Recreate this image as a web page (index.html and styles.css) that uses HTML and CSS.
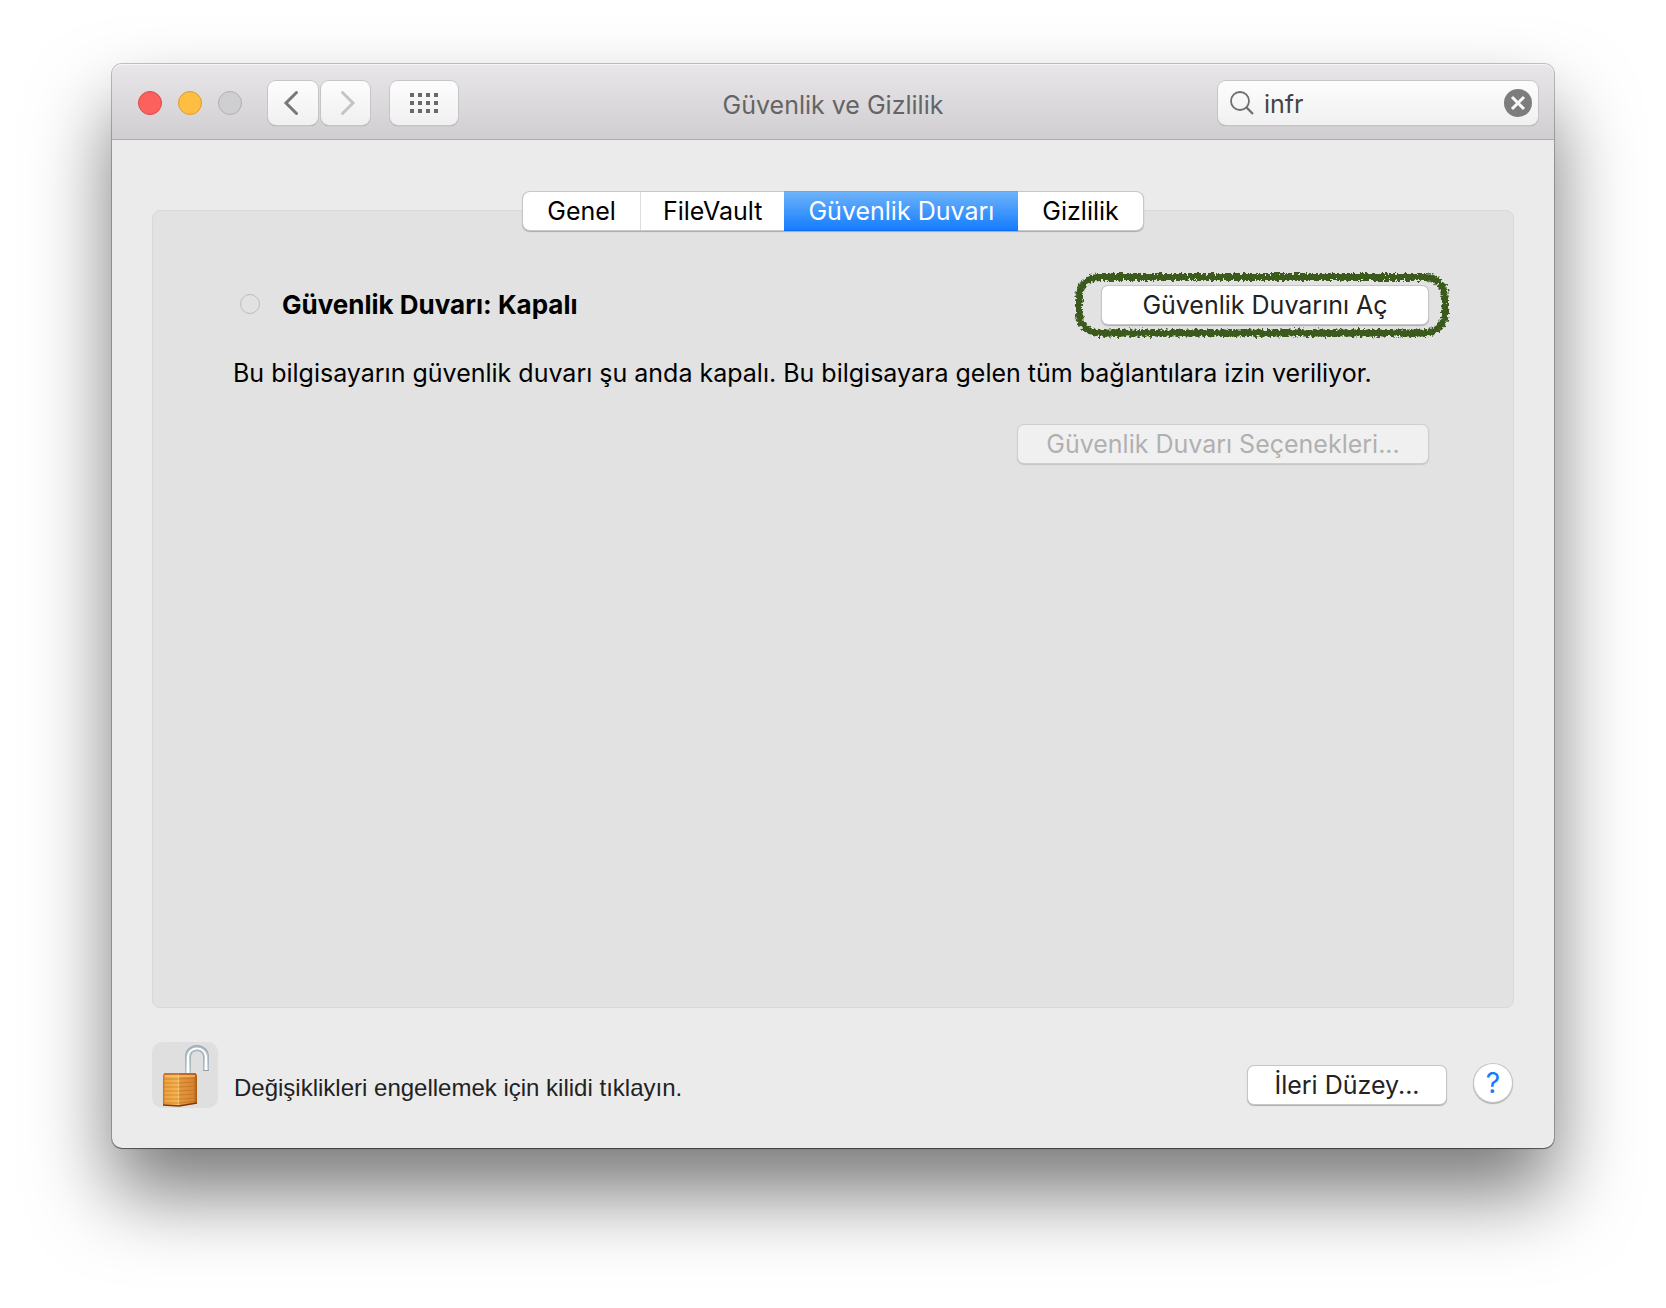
FILE: index.html
```html
<!DOCTYPE html>
<html lang="tr">
<head>
<meta charset="utf-8">
<meta name="viewport" content="width=device-width, initial-scale=1">
<title>Güvenlik ve Gizlilik</title>
<link rel="stylesheet" href="styles.css">
</head>
<body>
<main class="window">
  <header class="titlebar">
    <div class="titlebar-left">
      <div class="lights">
        <button class="light light-close" aria-label="Kapat"></button>
        <button class="light light-min" aria-label="Küçült"></button>
        <button class="light light-zoom" aria-label="Büyüt" disabled></button>
      </div>
      <div class="nav">
        <button class="tool tool-back" aria-label="Geri">
          <svg width="16" height="26" viewBox="0 0 16 26"><path d="M13.500 2.500 L3 13 L13.500 23.500" fill="none" stroke="#777" stroke-width="3" stroke-linecap="round"/></svg>
        </button>
        <button class="tool tool-forward" aria-label="İleri" disabled>
          <svg width="16" height="26" viewBox="0 0 16 26"><path d="M2.500 2.500 L13 13 L2.500 23.500" fill="none" stroke="#c4c4c4" stroke-width="3" stroke-linecap="round"/></svg>
        </button>
      </div>
      <button class="tool tool-all" aria-label="Tümünü Göster">
        <svg width="28" height="20" viewBox="0 0 28 20" fill="#6a6a6a"><path d="M0 0h4v4H0zM8 0h4v4H8zM16 0h4v4h-4zM24 0h4v4h-4zM0 8h4v4H0zM8 8h4v4H8zM16 8h4v4h-4zM24 8h4v4h-4zM0 16h4v4H0zM8 16h4v4H8zM16 16h4v4h-4zM24 16h4v4h-4z"/></svg>
      </button>
    </div>
    <h1 class="title">Güvenlik ve Gizlilik</h1>
    <div class="search">
      <svg width="24" height="24" viewBox="0 0 24 24" fill="none" stroke="#6e6e6e" stroke-width="1.800"><circle cx="10" cy="10" r="9"/><path d="M16.400 16.400 L23 23" stroke-width="2.200"/></svg>
      <input class="search-input" type="text" value="infr" aria-label="Ara">
      <button class="search-clear" aria-label="Temizle">
        <svg width="28" height="28" viewBox="0 0 28 28"><circle cx="14" cy="14" r="14" fill="#7d7d7d"/><path d="M8 8 L20 20 M20 8 L8 20" stroke="#fafafa" stroke-width="3"/></svg>
      </button>
    </div>
  </header>

  <div class="content">
    <nav class="tabs">
      <button class="tab">Genel</button>
      <button class="tab">FileVault</button>
      <button class="tab tab-active">Güvenlik Duvarı</button>
      <button class="tab">Gizlilik</button>
    </nav>
    <section class="panel">
      <div class="status">
        <span class="dot"></span>
        <h2 class="status-text">Güvenlik Duvarı: Kapalı</h2>
        <div class="marked">
          <button class="btn btn-turn-on">Güvenlik Duvarını Aç</button>
          <svg class="marker" width="380" height="72" viewBox="0 0 380 72" aria-hidden="true">
            <defs>
              <filter id="chalk" x="-5%" y="-10%" width="110%" height="120%">
                <feTurbulence type="fractalNoise" baseFrequency="0.350" numOctaves="2" seed="7" result="n"/>
                <feDisplacementMap in="SourceGraphic" in2="n" scale="6" xChannelSelector="R" yChannelSelector="G"/>
              </filter>
            </defs>
            <g fill="none" stroke="#3a5a1d" filter="url(#chalk)">
              <rect x="7" y="8" width="366" height="56" rx="20" stroke-width="6"/>
              <rect x="7" y="8" width="366" height="56" rx="20" stroke-width="8" stroke-dasharray="3 2 1 1 4 2"/>
            </g>
          </svg>
        </div>
      </div>
      <p class="description">Bu bilgisayarın güvenlik duvarı şu anda kapalı. Bu bilgisayara gelen tüm bağlantılara izin veriliyor.</p>
      <button class="btn btn-options" disabled>Güvenlik Duvarı Seçenekleri...</button>
    </section>
    <footer class="footer">
      <button class="lock" id="lock" aria-labelledby="lock-label">
        <svg width="66" height="66" viewBox="0 0 66 66">
          <defs>
            <linearGradient id="face" x1="0" x2="1"><stop offset="0" stop-color="#c06c18"/><stop offset=".12" stop-color="#eda340"/><stop offset=".9" stop-color="#f4b452"/><stop offset="1" stop-color="#ffd88a"/></linearGradient>
            <linearGradient id="side" x1="0" x2="1"><stop offset="0" stop-color="#e59a40"/><stop offset=".8" stop-color="#d78530"/><stop offset="1" stop-color="#a85512"/></linearGradient>
            <linearGradient id="steel" x1="0" y1="0" x2="0" y2="1"><stop offset="0" stop-color="#a9b6bc"/><stop offset="1" stop-color="#dce6ea"/></linearGradient>
          </defs>
          <path d="M36 33 V15 C36 3 54 3 54 15 V29" fill="none" stroke="#8fa0a8" stroke-width="6"/>
          <path d="M36 33 V15 C36 3 54 3 54 15 V28" fill="none" stroke="url(#steel)" stroke-width="5"/>
          <path d="M36 31 V15 C36 4.500 52 3 54 14 V28" fill="none" stroke="#fff" stroke-width="2"/>
          <path d="M11 33 L13 31 H27 V64 L11 63 Z" fill="url(#face)"/>
          <path d="M27 31 H43 L45 33 V61 L27 64 Z" fill="url(#side)"/>
          <path d="M11 37 H27 L45 36 M11 41 H27 L45 40 M11 45 H27 L45 44 M11 49 H27 L45 48 M11 53 H27 L45 52 M11 57 H27 L45 56 M11 61 H27 L45 59" fill="none" stroke="#b96619" stroke-width="1.200" opacity=".5"/>
          <path d="M12 32 H44" stroke="#a4511a" stroke-width="1.200"/>
          <path d="M13 34 H43" stroke="#ffc46c" stroke-width="1.200"/>
          <path d="M11 63 L27 64 L45 61" fill="none" stroke="#853708" stroke-width="1.400"/>
        </svg>
      </button>
      <label class="lock-label" id="lock-label" for="lock">Değişiklikleri engellemek için kilidi tıklayın.</label>
      <button class="btn btn-advanced">İleri Düzey...</button>
      <button class="help" aria-label="Yardım">?</button>
    </footer>
  </div>
</main>
</body>
</html>
```
FILE: styles.css
```css
* { box-sizing: border-box; }

body {
  margin: 0;
  min-height: 100vh;
  padding: 64px 112px 160px;
  display: flex;
  background: #fff;
  color: #000;
  font: 25px/32px Inter, "Liberation Sans", sans-serif;
}

button, input {
  font: inherit;
  color: inherit;
  margin: 0;
  padding: 0;
  border: 0;
}

svg { display: block; }

.window {
  flex: 1;
  display: flex;
  flex-direction: column;
  background: #ebebeb;
  border-radius: 10px;
  box-shadow: 0 0 0 1px rgba(0, 0, 0, .22), 0 1px 1px rgba(0, 0, 0, .4), 0 45px 80px rgba(0, 0, 0, .53);
}

.titlebar {
  height: 76px;
  padding: 2px 16px 0;
  display: grid;
  grid-template-columns: 1fr auto 1fr;
  align-items: center;
  background: linear-gradient(#e8e6e9, #d1ced2);
  border-bottom: 1px solid #aeaab0;
  border-radius: 10px 10px 0 0;
  box-shadow: inset 0 1px #f6f5f6;
}

.titlebar-left { display: flex; align-items: center; }
.lights { display: flex; gap: 16px; margin: 0 26px 0 10px; }

.light {
  width: 24px;
  height: 24px;
  border-radius: 50%;
}
.light-close { background: #fc615d; border: 1px solid #dd4744; }
.light-min { background: #fdbe41; border: 1px solid #dc9c33; }
.light-zoom { background: #cfced0; border: 1px solid #b0afb1; }

.nav { display: flex; gap: 3px; margin-right: 20px; }

.tool, .search {
  height: 44px;
  background: linear-gradient(#fdfdfd, #f0f0f0);
  border-radius: 8px;
  box-shadow: 0 0 0 1px #c6c4c7, 0 1px 1px #8c8a8d;
}
.tool { display: grid; place-items: center; }
.tool-back { width: 50px; padding-right: 4px; }
.tool-forward { width: 49px; padding-left: 4px; }
.tool-all { width: 68px; }

.title {
  margin: 4px 0 0;
  font-size: 25px;
  font-weight: 400;
  color: #646464;
}

.search {
  justify-self: end;
  width: 320px;
  padding: 0 6px 0 12px;
  display: flex;
  align-items: center;
  gap: 10px;
}
.search-input {
  flex: 1;
  min-width: 0;
  padding-top: 2px;
  background: none;
  outline: 0;
  color: #444;
}
.search-clear { background: none; }

.content {
  flex: 1;
  padding: 52px 40px 40px;
  display: flex;
  flex-direction: column;
}

.tabs {
  align-self: center;
  z-index: 1;
  margin-bottom: -20px;
  display: flex;
  background: #fff;
  border-radius: 7px;
  box-shadow: 0 0 0 1px #c8c8c8, 0 1px 1px 1px #aaa;
}
.tab {
  height: 38px;
  padding: 0 24px;
  background: none;
}
.tab + .tab { border-left: 1px solid #ddd; padding: 0 22px; }
.tab + .tab.tab-active {
  padding: 0 24px;
  background: linear-gradient(#6db3fa, #147dfe);
  border-left: 0;
  box-shadow: 0 -1px #66a8ee, 0 1px #0f6ef5;
  color: #fff;
}
.tab-active + .tab { border-left: 0; padding: 0 24px; }

.panel {
  flex: 1;
  padding: 75px 85px 40px 80px;
  display: flex;
  flex-direction: column;
  background: #e2e2e2;
  border: 1px solid #d8d8d8;
  border-radius: 8px;
}

.status { display: flex; align-items: center; }
.dot {
  width: 20px;
  height: 20px;
  margin: 0 22px 2px 7px;
  border: 1px solid #bcbcbc;
  border-radius: 50%;
}
.status-text {
  margin: 0 auto 0 0;
  font-size: 26px;
  font-weight: 700;
}

.marked { position: relative; }
.marker {
  position: absolute;
  top: -17px;
  left: -30px;
  pointer-events: none;
}

.btn {
  height: 38px;
  background: #fff;
  color: #222;
  border-radius: 6px;
  box-shadow: 0 0 0 1px #c6c6c6, 0 1px 1px 1px #b0b0b0;
}
.btn-turn-on { display: block; width: 326px; }
.btn-options {
  align-self: flex-end;
  width: 410px;
  background: #f0f0f0;
  color: #b0b0b0;
  box-shadow: 0 0 0 1px #cecece, 0 1px 1px 1px #c6c6c6;
}
.btn-advanced { width: 198px; }

.description {
  margin: 33px 0 36px;
}

.footer {
  margin-top: 34px;
  display: flex;
  align-items: center;
}
.lock {
  border-radius: 10px;
  background: #dfdfdf;
}
.lock-label {
  margin: 26px auto 0 16px;
  font: 24px/32px "Liberation Sans", Arial, sans-serif;
  color: #222;
}
.btn-advanced { margin: 20px 28px 0 0; }
.help {
  width: 38px;
  height: 38px;
  margin: 16px 2px 0 0;
  border-radius: 50%;
  background: #fff;
  color: #147dfe;
  font-size: 28px;
  box-shadow: 0 0 0 1px #c6c6c6, 0 1px 1px 1px #b0b0b0;
}
```
